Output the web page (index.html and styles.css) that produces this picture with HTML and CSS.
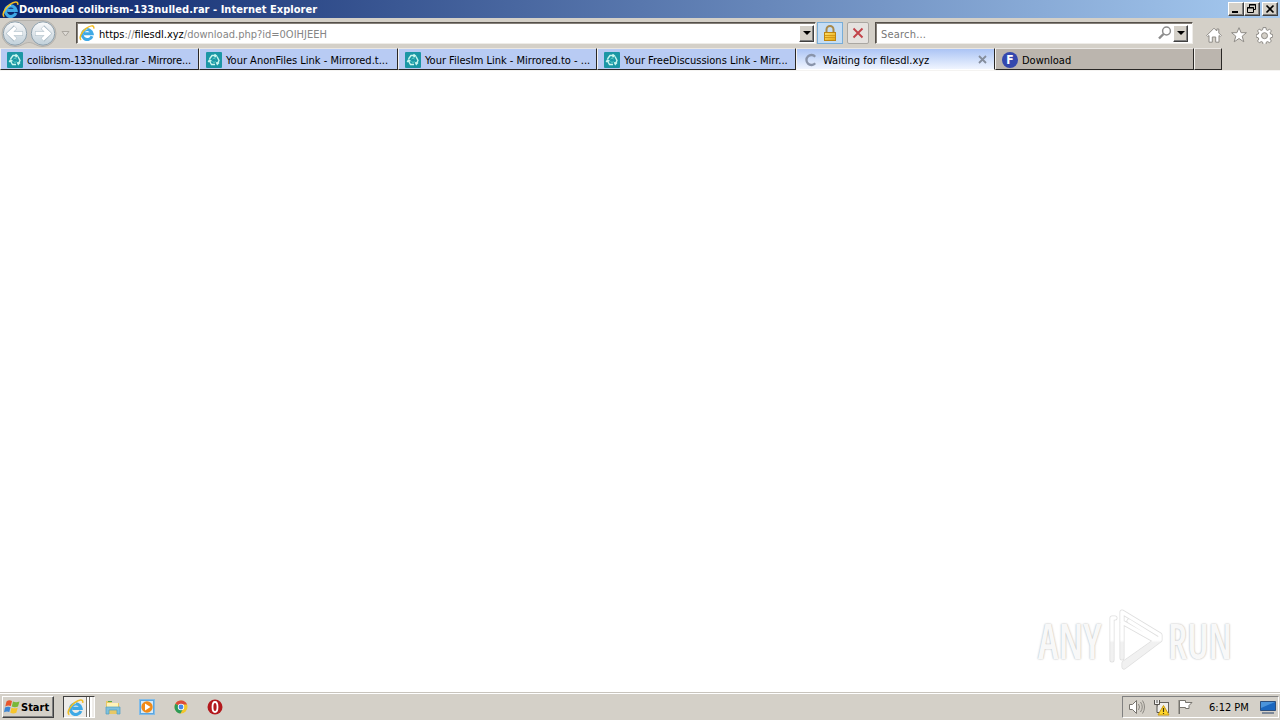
FILE: index.html
```
<!DOCTYPE html>
<html lang="en">
<head>
  <meta charset="UTF-8" />
  <title>Download colibrism-133nulled.rar - Internet Explorer</title>
  <link rel="stylesheet" href="styles.css">
</head>
<body>

  <svg class="defs" width="0" height="0">
    <defs>
      <linearGradient id="gold" x1="0" y1="0" x2="1" y2="1">
        <stop offset="0" stop-color="#ffe26a"/>
        <stop offset="1" stop-color="#e5a50e"/>
      </linearGradient>
      <linearGradient id="round" x1="0" y1="0" x2="0" y2="1">
        <stop offset="0" stop-color="#fafbfc"/>
        <stop offset=".5" stop-color="#dde4e9"/>
        <stop offset="1" stop-color="#c0d0da"/>
      </linearGradient>
      <linearGradient id="mark" gradientUnits="userSpaceOnUse" x1="0" y1="0" x2="0" y2="64">
        <stop offset=".5" stop-color="#ffffff"/>
        <stop offset=".54" stop-color="#f1f1f1"/>
      </linearGradient>
    </defs>
    <symbol id="ie" viewBox="0 0 16 16">
      <path d="M13 11.200A5 5 0 1 1 13.200 8.800H5" fill="none" stroke="#3fa9e6" stroke-width="3"/>
      <path d="M4 7.500Q5 4.500 8.500 4.300" fill="none" stroke="#a4e0fb" stroke-width="1"/>
      <path d="M2.200 14.800C-.6 13.600 2.400 7 7.200 3.400 11.500.2 15.400-.2 14.800 3.600" fill="none" stroke="#f2bd23" stroke-width="1.500"/>
    </symbol>
    <symbol id="mirror" viewBox="0 0 16 16">
      <rect width="16" height="16" rx="1" fill="#1b97a5"/>
      <path d="M3.500 7L6 3.500h3.500M8.500 2.200l1.800 1.500-1.800 1.500M11 4.500l2 4-1.500 3M13 10.500l-1.700 1.800-1-2M9 12.500H5.500l-2-3.500M2.200 10l1.200-1.800L5.500 9" fill="none" stroke="#c9f6ee" stroke-width="1.400"/>
      <path d="M6.500 7l1.500-1 1.500 1M6.500 9.500l1.500 1 1.500-1" fill="none" stroke="#5fd0c6"/>
    </symbol>
  </svg>

  <div class="title-bar">
    <svg class="app-icon" width="17" height="17"><use href="#ie"/></svg>
    <h1>Download colibrism-133nulled.rar - Internet Explorer</h1>
    <div class="window-buttons">
      <button><svg width="14" height="12"><path d="M3 8h6v2H3z"/></svg></button>
      <button><svg width="14" height="12"><path d="M4.500 4V1.500h6v5H9M4 2h7M2.500 4.500h6v5h-6zM2 5h7" fill="none" stroke="#000"/></svg></button>
      <button class="close"><svg width="14" height="12"><path d="M3.500 2.500l7 7M10.500 2.500l-7 7" stroke="#000" stroke-width="1.700"/></svg></button>
    </div>
  </div>

  <div class="nav-bar">
    <svg class="history" width="76" height="30">
      <path d="M15 2.500H43a13 13 0 0 1 0 26c-7 0-9-4-14-4s-7 4-14 4a13 13 0 0 1 0-26z" fill="#c9c7c3" stroke="#b5b2ac"/>
      <circle cx="15" cy="15.500" r="11.700" fill="url(#round)" stroke="#8fa1ad"/>
      <circle cx="43" cy="15.500" r="11.700" fill="url(#round)" stroke="#8fa1ad"/>
      <g stroke="#a9bac5" stroke-width="4.600" fill="none">
        <path d="M23 15.500H9M15.500 9L9 15.500l6.500 6.500"/>
        <path d="M35 15.500H49M42.500 9l6.500 6.500-6.500 6.500"/>
      </g>
      <g stroke="#fff" stroke-width="3.400" fill="none">
        <path d="M22.500 15.500H9M15.500 9.500L9 15.500l6.500 6"/>
        <path d="M35.500 15.500H49M42.500 9.500l6.500 6-6.500 6"/>
      </g>
      <path d="M62 13.500h7L65.500 18z" fill="#dedbd6" stroke="#aaa69f"/>
    </svg>

    <div class="field address">
      <svg class="site-icon" width="16" height="16"><use href="#ie"/></svg>
      <span class="url">https<i>://</i>filesdl.xyz<i>/download.php?id=0OIHJEEH</i></span>
      <button class="drop"></button>
    </div>

    <button class="tool lock">
      <svg width="16" height="16">
        <path d="M4.500 8V4.500a3.500 3.500 0 0 1 7 0V8" fill="none" stroke="#a8894a" stroke-width="2"/>
        <rect x="2.500" y="7.500" width="11" height="8" fill="url(#gold)" stroke="#bd8511"/>
        <path d="M3 10.500h10M3 12.500h10" stroke="#d59a18"/>
      </svg>
    </button>
    <button class="tool stop">
      <svg width="14" height="14"><path d="M2.500 2.500l9 9M11.500 2.500l-9 9" stroke="#c2434a" stroke-width="1.900"/></svg>
    </button>

    <div class="field search">
      <span class="hint">Search...</span>
      <svg class="glass" width="14" height="14"><circle cx="8.500" cy="5" r="3.900" fill="none" stroke="#8c8c8c" stroke-width="1.500"/><path d="M5.500 8L1 12.500" stroke="#8c8c8c" stroke-width="2.400"/></svg>
      <button class="drop"></button>
    </div>

    <div class="commands">
      <svg width="16" height="16" viewBox="0 0 16 16"><path d="M8 1.200l2.800 2.800V2h2v4l2.500 2.500-1 1-1.300-1v6.700H9.700V10H6.300v5.200H3V8.500l-1.300 1-1-1z"/></svg>
      <svg width="16" height="16" viewBox="0 0 16 16"><path d="M8 .7l2.100 5h5.300l-4.200 3.500 1.600 5.600L8 11.500l-4.800 3.300 1.600-5.600L.6 5.700h5.300z"/></svg>
      <svg width="17" height="17" viewBox="0 0 17 17"><path d="M7 .6h3l.3 2.200 1.400.6 1.900-1.300 1.800 1.800-1.300 1.900.6 1.300 2 .4v2.700l-2 .5-.6 1.400 1.300 1.900-1.800 1.800-1.900-1.200-1.400.5-.3 2.300H7l-.4-2.300-1.400-.5-1.900 1.200-1.800-1.800 1.300-1.900-.6-1.400-2-.5V7.500l2-.4.6-1.300-1.300-1.900 1.800-1.800 1.900 1.300 1.400-.6z"/><circle cx="8.500" cy="8.700" r="3" fill="#d4d0c8" stroke="#8e8b86"/></svg>
    </div>
  </div>

  <div class="tabs">
    <div class="tab linked"><svg width="16" height="16"><use href="#mirror"/></svg><span class="tight">colibrism-133nulled.rar - Mirrore...</span></div>
    <div class="tab linked"><svg width="16" height="16"><use href="#mirror"/></svg><span>Your AnonFiles Link - Mirrored.t...</span></div>
    <div class="tab linked"><svg width="16" height="16"><use href="#mirror"/></svg><span>Your FilesIm Link - Mirrored.to - ...</span></div>
    <div class="tab linked"><svg width="16" height="16"><use href="#mirror"/></svg><span>Your FreeDiscussions Link - Mirr...</span></div>
    <div class="tab active">
      <svg width="16" height="16"><path d="M12.200 4.700a5 5 0 1 0 0 6.600" fill="none" stroke="#8994aa" stroke-width="2.300"/></svg>
      <span>Waiting for filesdl.xyz</span>
      <svg class="tab-close" width="9" height="9"><path d="M1 1l7 7M8 1L1 8" stroke="#858d9c" stroke-width="1.800"/></svg>
    </div>
    <div class="tab"><b class="favicon">F</b><span>Download</span></div>
    <div class="tab new-tab"></div>
  </div>

  <div class="page">
    <div class="watermark">
      <span>ANY</span>
      <svg width="58" height="64">
        <g fill="none" stroke-linejoin="round" stroke-linecap="round">
          <path d="M14 50V4l38 23v5L16 59v-4l34-24-29-18M4 52V10h3M14 14l32 18" stroke="#dedede" stroke-width="5"/>
          <path d="M14 50V4l38 23v5L16 59v-4l34-24-29-18M4 52V10h3M14 14l32 18" stroke="url(#mark)" stroke-width="3.500"/>
        </g>
      </svg>
      <span class="run">RUN</span>
    </div>
  </div>

  <div class="taskbar">
    <button class="start">
      <svg width="17" height="16">
        <path d="M2.500 2.500Q5 .5 8 2L6.800 7Q4 6 1.300 7.500z" fill="#e9562b"/>
        <path d="M9 2.500q3 1.500 6.500 0L14 7.600q-3 1.300-6.200 0z" fill="#79b83a"/>
        <path d="M1 8.500Q4 7 6.500 8.200L5.300 13Q3 12 0 13.200z" fill="#3d86d4"/>
        <path d="M7.500 8.700q3 1.300 6.200 0l-1.400 5q-3 1.400-6 0z" fill="#f7c52c"/>
      </svg>
      Start
    </button>
    <div class="running"><svg width="17" height="17"><use href="#ie"/></svg><i></i><i></i></div>
    <div class="launchers">
      <svg width="16" height="16">
        <path d="M1 2h5l1 2h7v11H1z" fill="#e8c864"/>
        <path d="M2 4h11v5H2z" fill="#fff3b8"/><path d="M3 2h4v1H3z" fill="#58a94d"/>
        <path d="M1 8h14v7h-3v-4H4v4H1z" fill="#7fc0dd" stroke="#4f9dc2" stroke-width=".7"/>
      </svg>
      <svg width="16" height="16">
        <rect x=".5" y=".5" width="15" height="15" fill="#5ba5df" stroke="#83bce7"/>
        <rect x="2" y="2" width="12" height="12" fill="#d6ebf9"/>
        <circle cx="8" cy="8" r="5.700" fill="#f28a16"/><path d="M6 4.500l5.500 3.500L6 11.500z" fill="#fff"/>
      </svg>
      <svg width="16" height="16">
        <circle cx="8" cy="8" r="6.500" fill="#f3c62c"/>
        <path d="M8 8L2.400 4.700A6.500 6.500 0 0 1 14 5.500H8z" fill="#dc4b3c"/>
        <path d="M8 8L2.400 4.700A6.500 6.500 0 0 0 7.400 14.500L10.300 9.500z" fill="#2c9a58"/>
        <circle cx="8" cy="8" r="3.200" fill="#fff"/><circle cx="8" cy="8" r="2.400" fill="#4687e8"/>
      </svg>
      <svg width="16" height="16"><circle cx="8" cy="8" r="7.500" fill="#b3181c"/><ellipse cx="8" cy="8" rx="2.500" ry="5" fill="#b3181c" stroke="#fff" stroke-width="1.800"/></svg>
    </div>
    <div class="tray">
      <svg width="18" height="16">
        <path d="M1.500 5.500h3l4-4v13l-4-4h-3z" fill="#fff" stroke="#77746e"/>
        <path d="M10.500 5q2 3 0 6M12.500 3q3.500 5 0 10M14.500 1.500q4 6.500 0 13" fill="none" stroke="#8b8882"/>
      </svg>
      <svg width="17" height="17">
        <rect x="4.500" y="3.500" width="11" height="10" fill="#f0eee9" stroke="#66635e"/>
        <path d="M1.500 1v4.500h5V1M4 5.500V13.500h3M4 1v3" fill="#eee" stroke="#55524d"/>
        <path d="M10.500 6.500L16 16H5z" fill="#ffd629" stroke="#c89a16"/><path d="M10.500 9v4M10.500 14v1" stroke="#463713" stroke-width="1.200"/>
      </svg>
      <svg width="17" height="16"><path d="M2.500 15V1.500h6v2h6.500l-3 3v3H8.500v-1h-6" fill="#fff" stroke="#77746e"/><path d="M2 1v14" stroke="#77746e"/></svg>
      <time>6:12 PM</time>
      <svg class="desktop" width="16" height="16"><path d="M.5 2.500h15v9H.5z" fill="#1b67bf" stroke="#2d4f7d"/><path d="M1 3h14L1 9z" fill="#4b94db"/><path d="M2 14h12" stroke="#5f7189" stroke-width="1.500"/></svg>
    </div>
  </div>

</body>
</html>
```

FILE: styles.css
```
* {
  box-sizing: border-box;
}

body {
  margin: 0;
  height: 720px;
  display: flex;
  flex-direction: column;
  overflow: hidden;
  background: #fff;
  color: #000;
  font: 11px "DejaVu Sans Condensed", "DejaVu Sans", sans-serif;
  font-stretch: condensed;
  white-space: nowrap;
}

svg {
  display: block;
  flex: none;
}

button {
  margin: 0;
  padding: 0;
  font: inherit;
}

.defs {
  position: absolute;
}

.title-bar {
  height: 18px;
  flex: none;
  display: flex;
  align-items: center;
  padding: 0 2px;
  background: linear-gradient(to right, #0a246a, #a6caf0);
}

.title-bar h1 {
  margin: 0;
  color: #fff;
  font-size: 11px;
  font-weight: bold;
  letter-spacing: 0.04px;
}

.window-buttons {
  display: flex;
  margin-left: auto;
}

.window-buttons button,
.drop {
  background: #d4d0c8;
  border: 1px solid;
  border-color: #fff #404040 #404040 #fff;
  box-shadow: inset -1px -1px #808080;
}

.window-buttons button {
  width: 16px;
  height: 14px;
}

.window-buttons .close {
  margin-left: 2px;
}

.nav-bar {
  height: 30px;
  flex: none;
  display: flex;
  align-items: center;
  background: #d4d0c8;
}

.field {
  height: 22px;
  display: flex;
  align-items: center;
  padding: 0 1px 0 2px;
  background: #fff;
  border: 1px solid;
  border-color: #55504a #eeece8 #eeece8 #55504a;
  box-shadow: inset 1px 1px #858079;
}

.address {
  width: 740px;
}

.url {
  margin-left: 4px;
  padding-top: 2px;
}

.url i {
  font-style: normal;
  color: #858585;
}

.drop {
  width: 15px;
  height: 17px;
  display: flex;
  align-items: center;
  justify-content: center;
  margin-left: auto;
}

.drop::before {
  content: "";
  border: 4px solid transparent;
  border-top-color: #000;
  border-bottom: 0;
}

.tool {
  width: 22px;
  height: 22px;
  display: flex;
  align-items: center;
  justify-content: center;
  border: 1px solid #aaa7a2;
  background: #e5e2df;
}

.lock {
  width: 26px;
  margin-left: 1px;
  border-color: #78add8;
  background: #c5ddf4;
}

.stop {
  margin-left: 4px;
  border-radius: 2px;
}

.search {
  width: 318px;
  margin-left: 6px;
  padding-right: 4px;
}

.hint {
  margin-left: 3px;
  padding-top: 2px;
  color: #777;
  letter-spacing: 0.2px;
}

.glass {
  margin-left: auto;
}

.search .drop {
  margin-left: 1px;
}

.commands {
  display: flex;
  align-items: center;
  gap: 9px;
  margin: 4px 0 0 13px;
}

.commands path {
  fill: #fff;
  stroke: #8e8b86;
}

.tabs {
  height: 23px;
  flex: none;
  display: flex;
  background: #d4d0c8;
  border-bottom: 1px solid #f4f3f1;
}

.tab {
  width: 199px;
  height: 22px;
  display: flex;
  align-items: center;
  padding: 1px 7px 0 6px;
  background: #bbb5ae;
  border: 1px solid;
  border-color: #eae7e3 #292725 #292725 #f4f2ef;
}

.linked {
  background: #b8cbf3;
}

.tab span {
  margin-left: 4px;
  padding-top: 1px;
}

.tab .tight {
  letter-spacing: -0.15px;
}

.active {
  background: linear-gradient(#abc4f5, #f0f5ff);
  border-bottom-color: #fff;
}

.tab-close {
  margin-left: auto;
}

.favicon {
  width: 16px;
  height: 16px;
  border-radius: 50%;
  background: #3448ae;
  color: #fff;
  font-size: 12px;
  line-height: 16px;
  text-align: center;
}

.new-tab {
  width: 28px;
}

.page {
  flex: 1;
  display: flex;
  align-items: flex-end;
  justify-content: flex-end;
}

.watermark {
  display: flex;
  align-items: center;
  margin: 0 44px 20px 0;
  color: #f8f8f8;
  font: 600 49px/62px "Open Sans", sans-serif;
  font-stretch: condensed;
  text-shadow: 0 0 2px #a5a5a5;
}

.watermark span {
  width: 70px;
  transform: scaleX(0.86);
  transform-origin: left;
}

.watermark .run {
  width: 68px;
  margin-left: 2px;
  transform: scaleX(0.81);
}

.taskbar {
  height: 28px;
  flex: none;
  display: flex;
  align-items: center;
  padding: 1px 1px 0 2px;
  background: #d4d0c8;
  border-top: 1px solid #c8c4bd;
  box-shadow: inset 0 1px #fff;
}

.start {
  width: 52px;
  height: 22px;
  display: flex;
  align-items: center;
  padding-left: 1px;
  background: #d4d0c8;
  border: 1px solid;
  border-color: #fff #404040 #404040 #fff;
  box-shadow: inset -1px -1px #808080;
  font-weight: bold;
}

.running {
  width: 32px;
  height: 22px;
  display: flex;
  align-items: center;
  margin-left: 9px;
  padding-left: 3px;
  border: 1px solid;
  border-color: #404040 #fff #fff #404040;
  background: #eeece9;
}

.running i {
  width: 3px;
  height: 20px;
  margin-left: 2px;
  border-left: 1px solid #77736d;
  background: #fff;
}

.running i + i {
  margin-left: 0;
}

.launchers {
  display: flex;
  gap: 18px;
  margin-left: 10px;
}

.tray {
  width: 157px;
  height: 22px;
  display: flex;
  align-items: center;
  margin-left: auto;
  padding: 0 2px 0 5px;
  gap: 7px;
  border: 1px solid;
  border-color: #808080 #fff #fff #808080;
}

.tray time {
  margin-left: 8px;
}

.desktop {
  margin-left: auto;
}
```
